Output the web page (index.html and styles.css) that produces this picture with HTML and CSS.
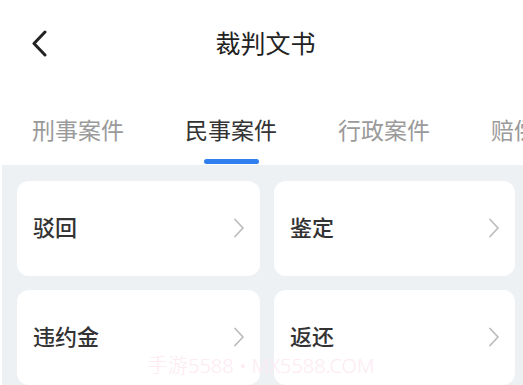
FILE: index.html
```html
<!DOCTYPE html>
<html>
<head>
<meta charset="utf-8">
<link rel="stylesheet" href="styles.css">
<title>裁判文书</title>
</head>
<body>
<div class="page">
  <header class="topbar">
    <a class="back" href="#">
      <svg width="16" height="28" viewBox="0 0 16 28"><path d="M14 2 L3 13.5 L14 25" fill="none" stroke="#222" stroke-width="3" stroke-linecap="round" stroke-linejoin="round"/></svg>
    </a>
    <h1 class="title">裁判文书</h1>
    <span></span>
  </header>

  <nav class="tabs">
    <a class="tab" href="#">刑事案件</a>
    <a class="tab active" href="#">民事案件</a>
    <a class="tab" href="#">行政案件</a>
    <a class="tab" href="#">赔偿案件</a>
  </nav>

  <main class="grid">
    <a class="card" href="#"><span>驳回</span><svg class="arrow" width="12" height="20" viewBox="0 0 12 20"><path d="M2 1.5 L10 10 L2 18.5" fill="none" stroke="#bdbdbd" stroke-width="1.8" stroke-linecap="round" stroke-linejoin="round"/></svg></a>
    <a class="card" href="#"><span>鉴定</span><svg class="arrow" width="12" height="20" viewBox="0 0 12 20"><path d="M2 1.5 L10 10 L2 18.5" fill="none" stroke="#bdbdbd" stroke-width="1.8" stroke-linecap="round" stroke-linejoin="round"/></svg></a>
    <a class="card" href="#"><span>违约金</span><svg class="arrow" width="12" height="20" viewBox="0 0 12 20"><path d="M2 1.5 L10 10 L2 18.5" fill="none" stroke="#bdbdbd" stroke-width="1.8" stroke-linecap="round" stroke-linejoin="round"/></svg></a>
    <a class="card" href="#"><span>返还</span><svg class="arrow" width="12" height="20" viewBox="0 0 12 20"><path d="M2 1.5 L10 10 L2 18.5" fill="none" stroke="#bdbdbd" stroke-width="1.8" stroke-linecap="round" stroke-linejoin="round"/></svg></a>
  </main>

  <div class="watermark">手游5588 • MX5588.COM</div>
</div>
</body>
</html>
```

FILE: styles.css
```css
html, body { margin: 0; padding: 0; }

body {
  background: #fff;
  color: #333;
  font-family: "Noto Sans", "Noto Sans CJK SC", sans-serif;
  width: 523px;
  height: 385px;
  overflow: hidden;
}

a { color: inherit; text-decoration: none; }

.page { position: relative; height: 385px; overflow: hidden; }

/* top bar */
.topbar {
  height: 88px;
  padding: 0 23px 0 31px;
  display: grid;
  grid-template-columns: 1fr auto 1fr;
  align-items: center;
}
.back { display: flex; }
.title {
  margin: 0;
  font-size: 25px;
  font-weight: 400;
  color: #222;
  line-height: 30px;
  padding-bottom: 2px;
}

/* tabs */
.tabs {
  height: 77px;
  padding-left: 32px;
  display: flex;
  gap: 61px;
  white-space: nowrap;
  overflow: hidden;
}
.tab {
  padding-top: 27px;
  font-size: 23px;
  line-height: 30px;
  color: #9a9a9a;
  flex: none;
}
.tab.active { color: #333; }
.tab.active::after {
  content: "";
  display: block;
  width: 55px;
  height: 5px;
  margin: 14px auto 0;
  border-radius: 3px;
  background: #2f7ff0;
}

/* cards */
.grid {
  margin-left: 2px;
  background: #eef1f4;
  padding: 16px 0 0 15px;
  display: grid;
  grid-template-columns: 243px 241px;
  grid-auto-rows: 95px;
  column-gap: 14px;
  row-gap: 14px;
  height: 300px;
}
.card {
  background: #fff;
  border-radius: 12px;
  padding: 0 15px 5px 16px;
  display: flex;
  align-items: center;
  justify-content: space-between;
  font-family: "Noto Sans CJK SC", sans-serif;
  font-size: 22px;
  font-weight: 500;
  color: #333;
}
.arrow { margin-top: 4px; }

.watermark {
  position: absolute;
  left: 148px;
  top: 350px;
  font-size: 20px;
  font-weight: 300;
  color: #fdeaf3;
  white-space: nowrap;
  pointer-events: none;
}
```
